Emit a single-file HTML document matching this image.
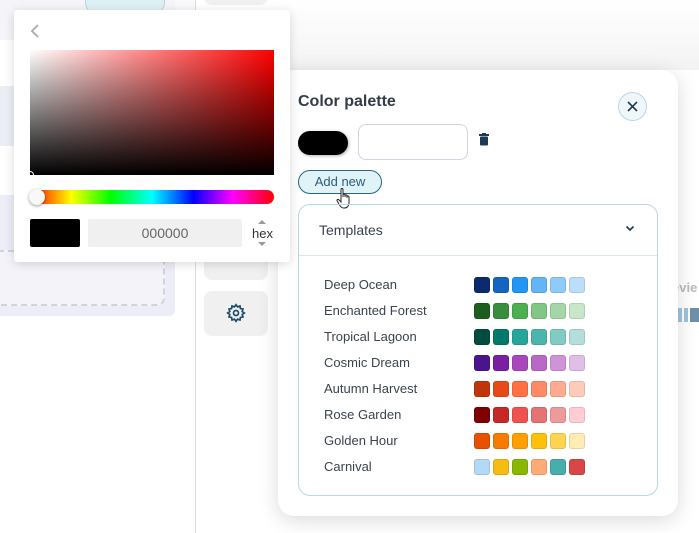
<!DOCTYPE html>
<html><head><style>
*{box-sizing:border-box;margin:0;padding:0}
body{width:699px;height:533px;overflow:hidden;background:#fff;font-family:"Liberation Sans",sans-serif;position:relative}
.a{position:absolute;white-space:nowrap}
</style></head><body>
<div class="a" style="left:0;top:0;width:175px;height:40px;background:#f4f4f9"></div>
<div class="a" style="left:175px;top:0;width:20px;height:40px;background:#f9f9fb"></div>
<div class="a" style="left:85px;top:-12px;width:80px;height:28px;border-radius:14px;background:#dff0f4;border:1px solid #b6d6e0"></div>
<div class="a" style="left:0;top:86px;width:175px;height:60px;background:#eceef6"></div>
<div class="a" style="left:0;top:195px;width:175px;height:121px;background:#ecedf6;border-radius:0 0 6px 0"></div>
<div class="a" style="left:-10px;top:250px;width:175px;height:56px;border:2px dashed #d2d2da;border-radius:8px;background:#f3f3f9"></div>
<div class="a" style="left:195px;top:0;width:1px;height:533px;background:#dcdcdc"></div>
<div class="a" style="left:204px;top:-20px;width:64px;height:25px;border-radius:8px;background:#f0f0f0"></div>
<div class="a" style="left:204px;top:230px;width:64px;height:50px;border-radius:8px;background:#f0f0f0"></div>
<div class="a" style="left:204px;top:291px;width:64px;height:45px;border-radius:8px;background:#f0f0f0"></div>
<svg class="a" style="left:226px;top:303px" width="20" height="20" viewBox="0 0 24 24" fill="none" stroke="#1d4a6b" stroke-width="2"><circle cx="12" cy="12" r="3"/><path d="M12 2l1.8 2.6 3-1 .5 3.1 3.1.5-1 3L22 12l-2.6 1.8 1 3-3.1.5-.5 3.1-3-1L12 22l-1.8-2.6-3 1-.5-3.1-3.1-.5 1-3L2 12l2.6-1.8-1-3 3.1-.5.5-3.1 3 1z"/></svg>
<div class="a" style="left:278px;top:0;width:421px;height:70px;background:linear-gradient(#fff,#f3f3f3)"></div>
<div class="a" style="left:672px;top:280px;font-size:13px;color:#bbb;font-weight:bold">evie</div>
<div class="a" style="left:678px;top:308px;width:21px;height:14px;background:linear-gradient(90deg,#9fc3dc 0 4px,transparent 4px 6px,#9fc3dc 6px 10px,transparent 10px 12px,#6f8fa8 12px 16px)"></div>
<div class="a" style="left:278px;top:70px;width:400px;height:446px;background:#fff;border-radius:16px;box-shadow:0 4px 20px rgba(0,0,0,.15)">
 <div class="a" style="left:20px;top:23px;font-size:16px;font-weight:bold;color:#333c48">Color palette</div>
 <div class="a" style="left:340px;top:22px;width:29px;height:29px;border-radius:50%;background:#f0f7fb;border:1px solid #bcd6e4"></div>
 <svg class="a" style="left:348px;top:30px" width="13" height="13" viewBox="0 0 13 13"><path d="M2 2l9 9M11 2l-9 9" stroke="#1d3a55" stroke-width="1.6"/></svg>
 <div class="a" style="left:20px;top:61px;width:50px;height:24px;border-radius:12px;background:#000;box-shadow:1px 1px 3px rgba(0,0,0,.3)"></div>
 <div class="a" style="left:80px;top:54px;width:110px;height:36px;border-radius:8px;border:1px solid #cdd6de"></div>
 <svg class="a" style="left:201px;top:63px" width="10" height="13" viewBox="0 0 10 13"><rect x="0" y="1" width="10" height="2" fill="#1d3a55"/><rect x="3" y="0" width="4" height="2" fill="#1d3a55"/><rect x="1" y="3.5" width="8" height="9" rx="1" fill="#1d3a55"/></svg>
 <div class="a" style="left:20px;top:100px;width:84px;height:24px;border-radius:12px;background:#e0f3f7;border:1px solid #2a6585;font-size:13px;color:#2a5d7e;text-align:center;line-height:22px">Add new</div>
 <svg class="a" style="left:58px;top:117px" width="18" height="24" viewBox="0 0 18 24"><path d="M5 2.5c0-1.3 2-1.3 2 0V10V8c0-1.3 2-1.3 2 0v2V8.8c0-1.3 2-1.3 2 0V11V10c0-1.3 2-1.3 2 0v6c0 3-2 5-4.5 5H7.5C5.5 21 4.5 19.5 3.5 18L1.2 14c-.7-1.2.8-2.2 1.7-1.2L5 15z" fill="#fff" stroke="#222" stroke-width="1"/></svg>
 <div class="a" style="left:20px;top:134px;width:360px;height:292px;border:1px solid #b8d8e4;border-radius:12px">
  <div class="a" style="left:20px;top:17px;font-size:14px;color:#3b4350">Templates</div>
  <svg class="a" style="left:326px;top:20px" width="10" height="7" viewBox="0 0 10 7"><path d="M1.5 1.5L5 5l3.5-3.5" stroke="#1d3a55" stroke-width="1.6" fill="none"/></svg>
  <div class="a" style="left:0;top:50px;width:358px;height:1px;background:#dbe7ec"></div>
 </div>
</div>
<div id="rows" class="a" style="left:0;top:0;width:699px;height:533px"></div>
<div class="a" style="left:14px;top:10px;width:276px;height:252px;background:#fff;border-radius:3px;box-shadow:0 2px 10px rgba(0,0,0,.15)">
 <svg class="a" style="left:15px;top:13px" width="12" height="16" viewBox="0 0 12 16"><path d="M9 2L3 8l6 6" stroke="#aaa" stroke-width="1.8" fill="none"/></svg>
 <div class="a" style="left:16px;top:40px;width:244px;height:125px;background:linear-gradient(to top,#000,rgba(0,0,0,0)),linear-gradient(to right,#fff,#f00)"></div>
 <div class="a" style="left:12px;top:161px;width:8px;height:8px;border-radius:50%;border:1px solid #fff"></div>
 <div class="a" style="left:16px;top:180px;width:244px;height:14px;border-radius:7px;background:linear-gradient(90deg,#f00,#ff0 17%,#0f0 33%,#0ff 50%,#00f 67%,#f0f 83%,#f00)"></div>
 <div class="a" style="left:15px;top:179px;width:16px;height:16px;border-radius:50%;background:#f8f8f8;box-shadow:0 1px 3px rgba(0,0,0,.4)"></div>
 <div class="a" style="left:16px;top:209px;width:50px;height:28px;background:#000;border-radius:2px"></div>
 <div class="a" style="left:74px;top:209px;width:154px;height:28px;background:#f0f0f0;border-radius:2px;font-size:14px;color:#666;text-align:center;line-height:28px">000000</div>
 <div class="a" style="left:238px;top:216px;font-size:13px;color:#333">hex</div>
 <div class="a" style="left:244px;top:210px;width:0;height:0;border:4px solid transparent;border-bottom-color:#999;border-top:0"></div>
 <div class="a" style="left:244px;top:232px;width:0;height:0;border:4px solid transparent;border-top-color:#999;border-bottom:0"></div>
</div>
<script>
var d=[["Deep Ocean",["#0d2a6e","#1565c0","#2196f3","#64b5f6","#90caf9","#bbdefb"]],
["Enchanted Forest",["#1b5e20","#388e3c","#4caf50","#81c784","#a5d6a7","#c8e6c9"]],
["Tropical Lagoon",["#004d40","#00796b","#26a69a","#4db6ac","#80cbc4","#b2dfdb"]],
["Cosmic Dream",["#4a148c","#7b1fa2","#ab47bc","#ba68c8","#ce93d8","#e1bee7"]],
["Autumn Harvest",["#bf360c","#e64a19","#ff7043","#ff8a65","#ffab91","#ffccbc"]],
["Rose Garden",["#7f0000","#c62828","#ef5350","#e57373","#ef9a9a","#ffcdd2"]],
["Golden Hour",["#e65100","#f57c00","#ffa000","#ffc107","#ffd54f","#ffecb3"]],
["Carnival",["#b3d9f7","#f5bc12","#8ab800","#ffab76","#48adad","#d84646"]]];
var h="";d.forEach(function(r,i){var y=277+i*26;h+='<div class="a" style="left:324px;top:'+y+'px;font-size:13px;color:#3b4350">'+r[0]+'</div>';
r[1].forEach(function(c,j){h+='<div class="a" style="left:'+(474+j*19)+'px;top:'+y+'px;width:16px;height:16px;border-radius:3px;background:'+c+';border:1px solid rgba(0,0,0,.1)"></div>'})});
document.getElementById('rows').innerHTML=h;
</script>
</body></html>
